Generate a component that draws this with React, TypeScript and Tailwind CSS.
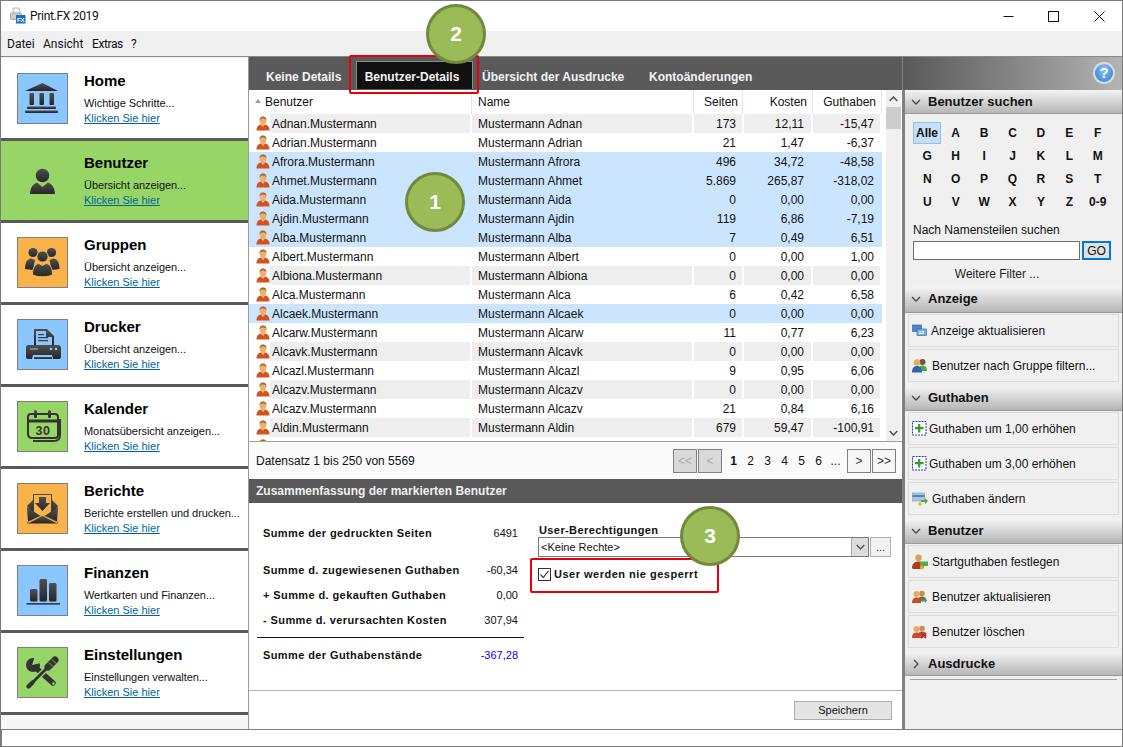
import React from "react";

const font = { sans: "font-['Liberation_Sans',Arial,sans-serif]" };

const rows: [string, string, string, string, boolean][] = [
  ["Adnan", "173", "12,11", "-15,47", false],
  ["Adrian", "21", "1,47", "-6,37", false],
  ["Afrora", "496", "34,72", "-48,58", true],
  ["Ahmet", "5.869", "265,87", "-318,02", true],
  ["Aida", "0", "0,00", "0,00", true],
  ["Ajdin", "119", "6,86", "-7,19", true],
  ["Alba", "7", "0,49", "6,51", true],
  ["Albert", "0", "0,00", "1,00", false],
  ["Albiona", "0", "0,00", "0,00", false],
  ["Alca", "6", "0,42", "6,58", false],
  ["Alcaek", "0", "0,00", "0,00", true],
  ["Alcarw", "11", "0,77", "6,23", false],
  ["Alcavk", "0", "0,00", "0,00", false],
  ["Alcazl", "9", "0,95", "6,06", false],
  ["Alcazv", "0", "0,00", "0,00", false],
  ["Alcazv", "21", "0,84", "6,16", false],
  ["Aldin", "679", "59,47", "-100,91", false],
];

function UserIcon() {
  return (
    <svg width="14" height="15" viewBox="0 0 14 15" className="shrink-0">
      <path d="M0.5 14.5 C0.5 10.5 2.5 9 5 8.5 L9 8.5 C11.5 9 13.5 10.5 13.5 14.5 Z" fill="#d4521c" />
      <path d="M5 8.5 L7 11 L9 8.5 Z" fill="#f3c58c" />
      <ellipse cx="7" cy="4.6" rx="3.4" ry="4" fill="#eeb070" />
      <path d="M3.6 4.4 C3.4 1.4 5 0.4 7 0.4 C9 0.4 10.6 1.4 10.4 4.4 C9.6 3 8.6 2.6 7 2.6 C5.4 2.6 4.4 3 3.6 4.4 Z" fill="#a86a24" />
    </svg>
  );
}

function Dark({ children }: { children: React.ReactNode }) {
  return (
    <svg width="49" height="49" viewBox="0 0 49 49">
      <defs>
        <linearGradient id="dk" x1="0" y1="0" x2="0" y2="1">
          <stop offset="0" stopColor="#4f4f4f" />
          <stop offset="1" stopColor="#262626" />
        </linearGradient>
      </defs>
      <g fill="url(#dk)">{children}</g>
    </svg>
  );
}

const BankIcon = () => (
  <Dark>
    <path d="M7 17 L24.5 9 L40 17 Z" />
    <rect x="11.5" y="19" width="4.5" height="12" rx="1" />
    <rect x="21.5" y="19" width="4.5" height="12" rx="1" />
    <rect x="31.5" y="19" width="4.5" height="12" rx="1" />
    <rect x="9" y="32.5" width="29" height="2.4" rx="1" />
    <rect x="7" y="36.5" width="33" height="2.4" rx="1" />
  </Dark>
);
const UserBig = () => (
  <Dark>
    <circle cx="24.5" cy="19.5" r="6.8" />
    <path d="M12 38 C12.5 31 15 28 19 26.5 L24.5 31 L30 26.5 C34 28 36.5 31 37 38 Z" />
  </Dark>
);
const GroupIcon = () => (
  <Dark>
    <circle cx="15" cy="14.5" r="4.6" />
    <circle cx="33.5" cy="14.5" r="4.6" />
    <path d="M7 31 C7 24 9.5 21 13 20.5 L17 22 L15 32 Z" />
    <path d="M41.5 31 C41.5 24 39 21 35.5 20.5 L31.5 22 L33.5 32 Z" />
    <circle cx="24.5" cy="18.5" r="5.6" stroke="#fab34a" strokeWidth="1" />
    <path d="M14.5 36.5 C14.5 29 17.5 26 21 25.5 L24.5 27.5 L28 25.5 C31.5 26 34.5 29 34.5 36.5 C31 39.5 18 39.5 14.5 36.5 Z" stroke="#fab34a" strokeWidth="1" />
  </Dark>
);
const PrinterIcon = () => (
  <Dark>
    <path fillRule="evenodd" d="M16 9 L29 9 L36 16 L36 25 L34 25 L34 17 L28 17 L28 11 L18 11 L18 25 L16 25 Z" />
    <rect x="20" y="14" width="6" height="1.2" />
    <rect x="20" y="17" width="10" height="1.2" />
    <rect x="20" y="20" width="10" height="1.2" />
    <path fillRule="evenodd" d="M10 25 L40 25 Q43 25 43 28 L43 37 Q43 39 40 39 L35 39 L34 35 L15 35 L14 39 L10 39 Q8 39 8 37 L8 28 Q8 25 10 25 Z" />
    <rect x="12" y="28.5" width="8" height="1" fill="#8ac6ff" />
    <circle cx="33" cy="29" r="1.3" fill="#8ac6ff" />
    <circle cx="38" cy="29" r="1.3" fill="#8ac6ff" />
    <rect x="16" y="37" width="18" height="2" />
  </Dark>
);
const CalendarIcon = () => (
  <Dark>
    <g fill="none" stroke="#333" strokeWidth="2">
      <path d="M13 12 L37 12 Q40 12 40 15 L40 33 Q40 36 37 36 L14 36 Q10 36 10 32 L10 15 Q10 12 13 12 Z" />
      <path d="M15 39 L36 39 Q42 39 42 33 L42 17" />
      <path d="M10 19 L40 19" strokeWidth="3" />
    </g>
    <rect x="16" y="8" width="3" height="8" rx="1.5" />
    <rect x="30" y="8" width="3" height="8" rx="1.5" />
    <text x="25" y="33" textAnchor="middle" fontFamily="Liberation Sans" fontWeight="700" fontSize="12.5" fill="#333" letterSpacing="0.6">30</text>
  </Dark>
);
const ReportIcon = () => (
  <Dark>
    <path d="M9 22 L15 16 L15 30 Z" />
    <path d="M40 22 L34 16 L34 30 Z" />
    <path d="M16 11 L33 11 L33 29 L24.5 34 L16 29 Z M15 10 L15 29 L24.5 35 L34 29 L34 10 Z" />
    <path d="M21 13 L28 13 L28 19 L32 19 L24.5 27 L17 19 L21 19 Z" />
    <path d="M9 23 L22.5 32 L10 38 Z" />
    <path d="M40 23 L26.5 32 L39 38 Z" />
    <path d="M11 39 L24.5 32 L38 39 Q40 39 40 37 L40 38 Q40 39.5 38 39.5 L11 39.5 Q9 39.5 9 38 Z" />
    <path d="M10 38 L24.5 31 L39 38" fill="none" stroke="#c9a050" strokeWidth="0.7" />
  </Dark>
);
const ChartIcon = () => (
  <Dark>
    <rect x="12" y="23" width="7.5" height="12.5" rx="1.5" />
    <rect x="21.5" y="13" width="7.5" height="22.5" rx="1.5" />
    <rect x="31" y="17" width="7.5" height="18.5" rx="1.5" />
    <rect x="8.5" y="37" width="33.5" height="1.6" />
  </Dark>
);
const ToolsIcon = () => (
  <svg width="49" height="49" viewBox="0 0 49 49">
    <g fill="#333" stroke="#333">
      <path d="M18 20 L35 35" strokeWidth="5.5" strokeLinecap="round" fill="none" />
      <circle cx="15" cy="17" r="7" stroke="none" />
      <path d="M14 17 L17 8 L25 8 L23 15 Z" fill="#96d566" stroke="none" />
    </g>
    <circle cx="35.5" cy="35.5" r="1.3" fill="#96d566" />
    <path d="M13 36 L29 20" stroke="#96d566" strokeWidth="5.4" fill="none" />
    <path d="M12 37 L29 20" stroke="#333" strokeWidth="2.8" fill="none" />
    <path d="M10.5 38.5 L14.5 34.5" stroke="#333" strokeWidth="4.4" fill="none" strokeLinecap="round" />
    <path d="M30 19 L37 12" stroke="#333" strokeWidth="7" fill="none" strokeLinecap="round" />
    <path d="M31 14.5 L35 18.5 M34 11.5 L38 15.5" stroke="#96d566" strokeWidth="0.8" fill="none" />
  </svg>
);

type Item = { title: string; sub: string; color: string; icon: React.ReactNode; active?: boolean };
const items: Item[] = [
  { title: "Home", sub: "Wichtige Schritte...", color: "bg-[#8ac6ff]", icon: <BankIcon /> },
  { title: "Benutzer", sub: "Übersicht anzeigen...", color: "bg-[#96d566]", icon: <UserBig />, active: true },
  { title: "Gruppen", sub: "Übersicht anzeigen...", color: "bg-[#fab34a]", icon: <GroupIcon /> },
  { title: "Drucker", sub: "Übersicht anzeigen...", color: "bg-[#8ac6ff]", icon: <PrinterIcon /> },
  { title: "Kalender", sub: "Monatsübersicht anzeigen...", color: "bg-[#96d566]", icon: <CalendarIcon /> },
  { title: "Berichte", sub: "Berichte erstellen und drucken...", color: "bg-[#fab34a]", icon: <ReportIcon /> },
  { title: "Finanzen", sub: "Wertkarten und Finanzen...", color: "bg-[#8ac6ff]", icon: <ChartIcon /> },
  { title: "Einstellungen", sub: "Einstellungen verwalten...", color: "bg-[#96d566]", icon: <ToolsIcon /> },
];

function NavItem({ it }: { it: Item }) {
  return (
    <div className={`h-[82px] shrink-0 border-b-[3px] border-[#5a5a5a] flex pl-[16px] ${it.active ? "bg-[#96d566]" : "bg-white"}`}>
      <div className={`mt-[14px] w-[51px] h-[51px] shrink-0 flex items-center justify-center ${it.active ? "" : "border border-[#808080]"} ${it.color}`}>
        {it.icon}
      </div>
      <div className="ml-[16px] pt-[13px] text-[#111]">
        <div className="text-[15px] leading-[18px] font-bold text-black">{it.title}</div>
        <div className="mt-[6px] text-[11px] leading-[15px] tracking-[-0.06px] whitespace-nowrap">{it.sub}</div>
        <div className="text-[11px] leading-[15px] text-[#00649c] underline">Klicken Sie hier</div>
      </div>
    </div>
  );
}

function Chevron({ right }: { right?: boolean }) {
  return (
    <svg width="10" height="10" viewBox="0 0 10 10" className="shrink-0">
      <path d={right ? "M3 1 L7 5 L3 9" : "M1 3 L5 7 L9 3"} fill="none" stroke="#444" strokeWidth="1.3" />
    </svg>
  );
}

function SectionHead({ title, right, h }: { title: string; right?: boolean; h: string }) {
  return (
    <div className={`${h} shrink-0 flex items-center pl-[6px] gap-[7px] bg-linear-to-b from-[#f4f4f4] to-[#b6b6b6] border-b border-[#9a9a9a]`}>
      <Chevron right={right} />
      <span className="text-[13px] font-bold text-[#111]">{title}</span>
    </div>
  );
}

function SideBtn({ icon, label, gap }: { icon: React.ReactNode; label: string; gap: string }) {
  return (
    <div className="h-[33px] w-[211px] border border-[#dcdcdc] flex items-center pl-[3px]">
      <span className="w-[16px] h-[16px] shrink-0 flex items-center justify-start">{icon}</span>
      <span className={`${gap} text-[12px] text-[#111] whitespace-nowrap`}>{label}</span>
    </div>
  );
}

const RefreshIcon = () => (
  <svg width="15" height="13" viewBox="0 0 15 13">
    <rect x="0.5" y="1" width="9" height="6.5" fill="#4a86c8" stroke="#2a5a9a" strokeWidth="0.6" />
    <rect x="5" y="5" width="9.5" height="6.5" fill="#79aee0" stroke="#2a5a9a" strokeWidth="0.6" />
    <path d="M7 8 L12 8 M12 8 L10.5 6.6 M7 9.6 L12 9.6" stroke="#fff" strokeWidth="0.9" fill="none" />
  </svg>
);
const GroupFilterIcon = () => (
  <svg width="15" height="15" viewBox="0 0 15 15">
    <circle cx="10.5" cy="4" r="3" fill="#6e5a3a" />
    <path d="M6 13 C6 9 8 7.5 10.5 7.5 C13 7.5 15 9 15 13 Z" fill="#4da84a" />
    <circle cx="5" cy="4.5" r="3.2" fill="#e8a860" />
    <path d="M0 14.5 C0 10 2 8 5 8 C8 8 10 10 10 14.5 Z" fill="#2e62b4" />
  </svg>
);
const PlusIcon = () => (
  <svg width="15" height="15" viewBox="0 0 15 15">
    <rect x="0.5" y="0.5" width="13.5" height="13.5" fill="#fff" stroke="#1c3fa8" strokeDasharray="2 1" />
    <path d="M7.2 3 V11.5 M3 7.2 H11.5" stroke="#2f9e2f" strokeWidth="2.2" />
  </svg>
);
const CardIcon = () => (
  <svg width="16" height="14" viewBox="0 0 16 14">
    <rect x="0.5" y="1" width="12" height="8" fill="#a9c6e4" stroke="#7d98b5" strokeWidth="0.6" />
    <rect x="0.5" y="3" width="12" height="2" fill="#5a7fa8" />
    <path d="M9 8 L13 8 L13 6 L16 9 L13 12 L13 10 L9 10 Z" fill="#4fae3a" />
    <circle cx="8" cy="12" r="1.8" fill="#e3b23a" />
  </svg>
);
const StartIcon = () => (
  <svg width="16" height="16" viewBox="0 0 16 16">
    <circle cx="6.5" cy="3.8" r="3.2" fill="#dba15a" />
    <path d="M0 14 C0 9.5 3 7.5 6.5 7.5 C9.5 7.5 12 9 12 13 L10 15 L1 15 Z" fill="#b8361a" />
    <rect x="8" y="7.5" width="8" height="4.5" fill="#4fb04a" />
    <circle cx="10" cy="13.5" r="2" fill="#e3b23a" />
  </svg>
);
const PairIcon = ({ x }: { x?: boolean }) => (
  <svg width="15" height="14" viewBox="0 0 15 14">
    <circle cx="10" cy="3.5" r="2.8" fill="#c98f4c" />
    <path d="M5.5 11 C5.5 8 7.5 6.5 10 6.5 C12.5 6.5 14.5 8 14.5 11 Z" fill="#7c6a50" />
    <circle cx="4.5" cy="4" r="3" fill="#e8a860" />
    <path d="M0 13 C0 9 2 7.5 4.5 7.5 C7 7.5 9 9 9 13 Z" fill="#cf4a1e" />
    {x ? (
      <path d="M9 8 L14 13 M14 8 L9 13" stroke="#d8232a" strokeWidth="2" />
    ) : (
      <path d="M9 9.5 L13 9.5 L13 8 L15 10.5 L13 13 L13 11.5 L9 11.5 Z" fill="#3aa24a" />
    )}
  </svg>
);

const letters = ["Alle", "A", "B", "C", "D", "E", "F", "G", "H", "I", "J", "K", "L", "M", "N", "O", "P", "Q", "R", "S", "T", "U", "V", "W", "X", "Y", "Z", "0-9"];

function Badge({ n, cls }: { n: string; cls: string }) {
  return (
    <div className={`absolute ${cls} w-[60px] h-[60px] rounded-full bg-[#9bbb59] border-[3px] border-[#71893f] flex items-center justify-center text-white font-bold text-[21px]`}>
      {n}
    </div>
  );
}

function SumRow({ label, value, cls, blue }: { label: string; value: string; cls: string; blue?: boolean }) {
  return (
    <div className={`${cls} flex items-center justify-between pl-[6px] pr-[6px]`}>
      <span className="text-[11px] font-bold text-[#111] tracking-[0.4px] whitespace-nowrap">{label}</span>
      <span className={`text-[11px] ${blue ? "text-[#0000ff]" : "text-[#111]"}`}>{value}</span>
    </div>
  );
}

function PageBtn({ t, off }: { t: string; off?: boolean }) {
  return (
    <div className={`w-[24px] h-[24px] border border-[#808080] flex items-center justify-center text-[12px] ${off ? "bg-[#d9d9d9] text-[#a8a8a8]" : "bg-[#f6f6f6] text-[#333]"}`}>
      {t}
    </div>
  );
}

export default function App() {
  return (
    <div className={`relative w-[1123px] h-[747px] overflow-hidden border border-[#7a7a7a] bg-white flex flex-col ${font.sans}`}>
      {/* title bar */}
      <div className="h-[30px] shrink-0 flex items-center bg-white">
        <svg width="16" height="17" viewBox="0 0 16 17" className="ml-[9px] mb-[1px]">
          <path d="M3 1 L9 1 L10 4 L10 8 L3 8 Z" fill="#f4f4f4" stroke="#9aa0a8" strokeWidth="0.7" />
          <rect x="0.5" y="6" width="11" height="6.5" rx="1" fill="#c9ced4" stroke="#7e858d" strokeWidth="0.6" />
          <rect x="6" y="8" width="9.5" height="8.5" fill="#1c6fc0" />
          <text x="10.8" y="14.7" textAnchor="middle" fontSize="6" fontWeight="700" fill="#fff" fontFamily="Liberation Sans">FX</text>
        </svg>
        <span className="ml-[4px] font-['Roboto',sans-serif] text-[12px] tracking-[-0.3px] text-[#111]">Print.FX 2019</span>
        <div className="ml-auto flex items-center">
          <div className="w-[46px] h-[30px] flex items-center justify-center">
            <svg width="11" height="11" viewBox="0 0 11 11"><path d="M0.5 5.5 H10.5" stroke="#111" /></svg>
          </div>
          <div className="w-[45px] h-[30px] flex items-center justify-center">
            <svg width="11" height="11" viewBox="0 0 11 11"><rect x="0.5" y="0.5" width="10" height="10" fill="none" stroke="#111" /></svg>
          </div>
          <div className="w-[46px] h-[30px] flex items-center justify-center">
            <svg width="11" height="11" viewBox="0 0 11 11"><path d="M0.5 0.5 L10.5 10.5 M10.5 0.5 L0.5 10.5" stroke="#111" /></svg>
          </div>
        </div>
      </div>
      {/* menu */}
      <div className="h-[26px] shrink-0 bg-[#f0f0f0] border-b border-[#8a8a8a] flex items-center pl-[6px] font-['Roboto',sans-serif] text-[12px] text-[#111]">
        <span className="w-[36px]">Datei</span>
        <span className="w-[49px]">Ansicht</span>
        <span className="w-[39px] tracking-[-0.4px]">Extras</span>
        <span>?</span>
      </div>
      {/* body */}
      <div className="flex h-[672px] shrink-0">
        {/* sidebar */}
        <div className="w-[248px] shrink-0 border-r border-[#9a9a9a] bg-[#f7f7f7] flex flex-col pt-[2px]">
          {items.map((it) => (
            <NavItem key={it.title} it={it} />
          ))}
        </div>
        {/* center */}
        <div className="w-[653px] shrink-0 flex flex-col">
          <div className="h-[33px] shrink-0 bg-[#595959] flex items-end text-[12px] font-bold text-[#f2f2f2]">
            <span className="ml-[17px] w-[76px] mb-[4px] whitespace-nowrap">Keine Details</span>
            <span className="ml-[14px] mb-[1px] w-[117px] h-[28px] bg-[#111] border border-[#8a8a8a] border-b-0 pr-[5px] pt-[2px] flex items-center justify-center whitespace-nowrap">Benutzer-Details</span>
            <span className="ml-[9px] w-[143px] mb-[4px] whitespace-nowrap">Übersicht der Ausdrucke</span>
            <span className="ml-[24px] mb-[4px] whitespace-nowrap">Kontoänderungen</span>
          </div>
          {/* table */}
          <div className="h-[351px] shrink-0 flex overflow-hidden">
            <div className="w-[637px] shrink-0 text-[12px] text-[#111]">
              <div className="h-[24px] flex items-center">
                <span className="w-[223px] pl-[6px] flex items-center gap-[4px] h-full border-r border-[#e6e6e6]">
                  <svg width="6" height="4" viewBox="0 0 6 4" className="mb-[2px]"><path d="M3 0 L6 4 L0 4 Z" fill="#9a9a9a" /></svg>
                  Benutzer
                </span>
                <span className="w-[222px] pl-[6px] h-full flex items-center border-r border-[#e6e6e6]">Name</span>
                <span className="w-[49px] pr-[4px] h-full flex items-center justify-end border-r border-[#e6e6e6]">Seiten</span>
                <span className="w-[70px] pr-[5px] h-full flex items-center justify-end border-r border-[#e6e6e6]">Kosten</span>
                <span className="w-[69px] pr-[5px] h-full flex items-center justify-end border-r border-[#e6e6e6]">Guthaben</span>
              </div>
              {rows.map((r, i) => {
                const grey = !r[4] && i % 2 === 0;
                const cell = grey ? "bg-[#eeeeee]" : "";
                return (
                  <div key={i} className={`h-[19px] w-[633px] flex items-center ${r[4] ? "bg-[#cce5ff]" : ""}`}>
                    <span className="w-[21px] pl-[7px] shrink-0"><UserIcon /></span>
                    <span className={`w-[200px] h-full flex items-center pl-[2px] ${cell}`}>{r[0]}.Mustermann</span>
                    <span className={`ml-[2px] w-[220px] h-full flex items-center pl-[6px] ${cell}`}>Mustermann {r[0]}</span>
                    <span className={`ml-[2px] w-[48px] h-full flex items-center justify-end pr-[6px] ${cell}`}>{r[1]}</span>
                    <span className={`ml-[2px] w-[67px] h-full flex items-center justify-end pr-[7px] ${cell}`}>{r[2]}</span>
                    <span className={`ml-[2px] w-[67px] h-full flex items-center justify-end pr-[6px] ${cell}`}>{r[3]}</span>
                  </div>
                );
              })}
              <div className="h-[19px] w-[633px] flex items-center">
                <span className="w-[21px] pl-[7px] shrink-0"><UserIcon /></span>
              </div>
            </div>
            {/* scrollbar */}
            <div className="w-[15px] shrink-0 bg-[#f0f0f0] flex flex-col">
              <div className="h-[17px] flex items-center justify-center">
                <svg width="9" height="6" viewBox="0 0 9 6"><path d="M0.7 5 L4.5 1 L8.3 5" fill="none" stroke="#505050" strokeWidth="1.5" /></svg>
              </div>
              <div className="h-[22px] bg-[#cdcdcd]" />
              <div className="flex-1" />
              <div className="h-[17px] flex items-center justify-center">
                <svg width="9" height="6" viewBox="0 0 9 6"><path d="M0.7 1 L4.5 5 L8.3 1" fill="none" stroke="#505050" strokeWidth="1.5" /></svg>
              </div>
            </div>
          </div>
          <div className="h-[1px] shrink-0 bg-[#a0a0a0]" />
          {/* pagination */}
          <div className="h-[37px] shrink-0 bg-[#fafafa] flex items-center pl-[7px] text-[12px] text-[#111]">
            <span>Datensatz 1 bis 250 von 5569</span>
            <div className="ml-auto mr-[6px] flex items-center">
              <PageBtn t="<<" off />
              <div className="ml-[1px]"><PageBtn t="<" off /></div>
              <div className="flex ml-[3px] mr-[3px]">
                {["1", "2", "3", "4", "5", "6", "..."].map((p, i) => (
                  <span key={p} className={`w-[17px] text-center ${i === 0 ? "font-bold" : ""}`}>{p}</span>
                ))}
              </div>
              <PageBtn t=">" />
              <div className="ml-[1px]"><PageBtn t=">>" /></div>
            </div>
          </div>
          <div className="h-[24px] shrink-0 bg-[#595959] flex items-center pl-[7px] text-[12px] font-bold text-[#f0f0f0]">
            Zusammenfassung der markierten Benutzer
          </div>
          {/* summary */}
          <div className="h-[187px] shrink-0 flex">
            <div className="w-[267px] ml-[8px] shrink-0 flex flex-col pt-[21px]">
              <SumRow label="Summe der gedruckten Seiten" value="6491" cls="h-[18px]" />
              <SumRow label="Summe d. zugewiesenen Guthaben" value="-60,34" cls="h-[18px] mt-[19px]" />
              <SumRow label="+ Summe d. gekauften Guthaben" value="0,00" cls="h-[18px] mt-[7px]" />
              <SumRow label="- Summe d. verursachten Kosten" value="307,94" cls="h-[18px] mt-[7px]" />
              <div className="h-[1px] bg-[#111] mt-[8px]" />
              <SumRow label="Summe der Guthabenstände" value="-367,28" cls="h-[18px] mt-[8px]" blue />
            </div>
            <div className="ml-[14px] flex-1 flex flex-col pt-[20px] pr-[11px]">
              <div className="pl-[1px] text-[11px] font-bold text-[#111] leading-[14px] tracking-[0.4px] whitespace-nowrap">User-Berechtigungen</div>
              <div className="flex items-stretch h-[20px]">
                <div className="flex-1 border border-[#7a7a7a] flex items-center text-[11px] text-[#111] pl-[2px]">
                  &lt;Keine Rechte&gt;
                  <div className="ml-auto h-full w-[17px] bg-[#dcdcdc] border-l border-[#aaaaaa] flex items-center justify-center">
                    <svg width="9" height="6" viewBox="0 0 9 6"><path d="M0.7 1 L4.5 5 L8.3 1" fill="none" stroke="#444" strokeWidth="1.1" /></svg>
                  </div>
                </div>
                <div className="ml-[1px] w-[21px] border border-[#b0b0b0] bg-[#f2f2f2] flex items-center justify-center text-[11px] text-[#333] leading-[14px]">...</div>
              </div>
              <div className="mt-[9px] flex items-center gap-[3px]">
                <svg width="13" height="13" viewBox="0 0 13 13" className="shrink-0">
                  <rect x="0.5" y="0.5" width="12" height="12" fill="#fff" stroke="#333" />
                  <path d="M2.5 6.5 L5.2 9.5 L10.5 2.8" fill="none" stroke="#444" strokeWidth="1.2" />
                </svg>
                <span className="text-[11px] font-bold text-[#111] tracking-[0.5px] whitespace-nowrap">User werden nie gesperrt</span>
              </div>
            </div>
          </div>
          <div className="h-[1px] shrink-0 bg-[#b0b0b0]" />
          <div className="h-[38px] shrink-0 flex items-center justify-end pr-[10px]">
            <div className="w-[98px] h-[19px] bg-[#e4e4e4] border border-[#adadad] flex items-center justify-center text-[11px] text-[#111]">Speichern</div>
          </div>
        </div>
        {/* right panel */}
        <div className="flex-1 min-w-0 flex flex-col border-l border-[#808080]">
          <div className="h-[33px] shrink-0 flex items-center justify-end pr-[7px] pb-[2px] bg-linear-to-r from-[#595959] to-[#b4b4b4]">
            <div className="w-[22px] h-[22px] rounded-full bg-radial-[at_50%_30%] from-[#8cc4f4] to-[#2c78cc] border-2 border-[#d6dde4] flex items-center justify-center text-white font-bold text-[15px] leading-none">?</div>
          </div>
          <div className="flex-1 min-h-0 bg-[#f0f0f0] border-l-2 border-[#808080] flex flex-col">
            <SectionHead title="Benutzer suchen" h="h-[24px]" />
            <div className="h-[173px] shrink-0 pl-[8px] pt-[8px]">
              <div className="grid grid-cols-7 w-[199px] auto-rows-[23px] text-[12px] font-bold text-[#111]">
                {letters.map((l, i) => (
                  <span key={l} className={`h-[22px] flex items-center justify-center ${i === 0 ? "w-[28px] bg-[#c4dff6] border border-[#8cc4f0]" : ""}`}>{l}</span>
                ))}
              </div>
              <div className="mt-[8px] text-[12px] leading-[16px] text-[#111]">Nach Namensteilen suchen</div>
              <div className="mt-[3px] flex h-[19px]">
                <div className="w-[167px] bg-white border border-[#6e6e6e]" />
                <div className="ml-[2px] w-[29px] border-2 border-[#0078d7] bg-[#e1e1e1] flex items-center justify-center text-[12px] text-[#111]">GO</div>
              </div>
              <div className="mt-[6px] w-[168px] text-center text-[12px] leading-[16px] text-[#222]">Weitere Filter ...</div>
            </div>

            <SectionHead title="Anzeige" h="h-[26px] pb-[2px]" />
            <div className="pl-[3px] pt-[1px] pb-[4px] flex flex-col gap-[2px]">
              <SideBtn icon={<RefreshIcon />} label="Anzeige aktualisieren" gap="ml-[3px]" />
              <SideBtn icon={<GroupFilterIcon />} label="Benutzer nach Gruppe filtern..." gap="ml-[4px]" />
            </div>

            <SectionHead title="Guthaben" h="h-[25px]" />
            <div className="pl-[3px] pt-[1px] pb-[4px] flex flex-col gap-[2px]">
              <SideBtn icon={<PlusIcon />} label="Guthaben um 1,00 erhöhen" gap="ml-[1px]" />
              <SideBtn icon={<PlusIcon />} label="Guthaben um 3,00 erhöhen" gap="ml-[1px]" />
              <SideBtn icon={<CardIcon />} label="Guthaben ändern" gap="ml-[4px]" />
            </div>

            <SectionHead title="Benutzer" h="h-[25px]" />
            <div className="pl-[3px] pt-[1px] pb-[4px] flex flex-col gap-[2px]">
              <SideBtn icon={<StartIcon />} label="Startguthaben festlegen" gap="ml-[4px]" />
              <SideBtn icon={<PairIcon />} label="Benutzer aktualisieren" gap="ml-[4px]" />
              <SideBtn icon={<PairIcon x />} label="Benutzer löschen" gap="ml-[4px]" />
            </div>

            <SectionHead title="Ausdrucke" right h="h-[24px]" />
            <div className="mt-[3px] ml-[5px] w-[207px] h-[1px] bg-[#a0a0a0]" />
          </div>
        </div>
      </div>
      {/* status bar */}
      <div className="flex-1 min-h-0 bg-white border-t border-l border-[#808080]" />

      {/* call-outs */}
      <div className="absolute left-[348px] top-[54px] w-[130px] h-[39px] border-2 border-red-600 rounded-[2px]" />
      <div className="absolute left-[529px] top-[557px] w-[189px] h-[35px] border-2 border-red-600 rounded-[2px]" />
      <Badge n="1" cls="left-[404px] top-[171px]" />
      <Badge n="2" cls="left-[425px] top-[3px]" />
      <Badge n="3" cls="left-[679px] top-[505px]" />
    </div>
  );
}
